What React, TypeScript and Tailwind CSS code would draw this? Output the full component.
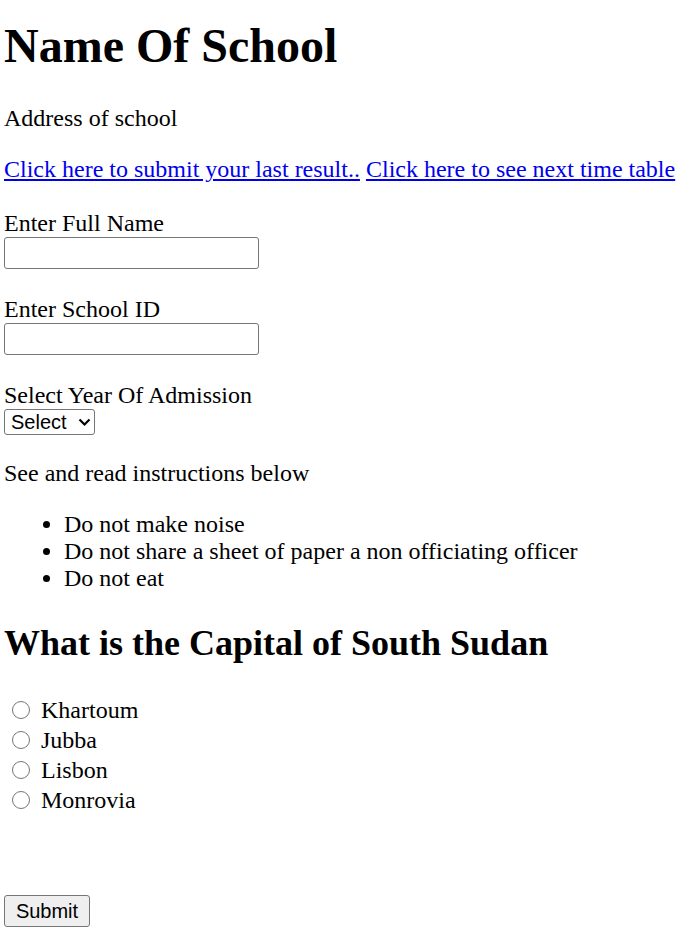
import React from 'react';

const rules = [
  'Do not make noise',
  'Do not share a sheet of paper a non officiating officer',
  'Do not eat',
];

const choices = ['Khartoum', 'Jubba', 'Lisbon', 'Monrovia'];

export default function App() {
  return (
    <div className="bg-white text-black font-['Liberation_Serif','Times_New_Roman',serif] text-[24px] leading-[normal] pl-[4px] pt-[18px] min-h-[933px]">
      <h1 className="text-[48px] font-bold leading-[normal] mb-[32px]">Name Of School</h1>

      <p className="mb-[24px]">Address of school</p>

      <p className="mb-[27px] whitespace-nowrap">
        <a href="#" className="text-[#0000ee] underline">Click here to submit your last result..</a>{' '}
        <a href="#" className="text-[#0000ee] underline">Click here to see next time table</a>
      </p>

      {/* form fields */}
      <form>
        <div className="mb-[27px]">
          <label className="block">Enter Full Name</label>
          <input
            type="text"
            className="block w-[255px] h-[32px] border-[1.5px] border-[#767676] rounded-[3px] bg-white px-[3px] font-['Liberation_Sans',Arial,sans-serif] text-[20px]"
          />
        </div>

        <div className="mb-[27px]">
          <label className="block">Enter School ID</label>
          <input
            type="text"
            className="block w-[255px] h-[32px] border-[1.5px] border-[#767676] rounded-[3px] bg-white px-[3px] font-['Liberation_Sans',Arial,sans-serif] text-[20px]"
          />
        </div>

        <div className="mb-[25px]">
          <label className="block">Select Year Of Admission</label>
          <div className="relative w-[91px] h-[26px]">
            <select className="appearance-none block w-full h-full border-[1.5px] border-[#767676] rounded-[3px] bg-white pl-[6px] pr-[20px] font-['Liberation_Sans',Arial,sans-serif] text-[20px] leading-[20px] text-black">
              <option>Select</option>
              <option>2019</option>
              <option>2020</option>
              <option>2021</option>
            </select>
            <svg className="absolute right-[4px] top-[9px] pointer-events-none" width="13" height="9" viewBox="0 0 13 9">
              <path d="M1.5 1.5 L6.5 6.5 L11.5 1.5" fill="none" stroke="#000" strokeWidth="2.2" />
            </svg>
          </div>
        </div>

        <p className="mb-[24px]">See and read instructions below</p>

        <ul className="list-disc pl-[60px] mb-[24px]">
          {rules.map((r) => (
            <li key={r}>{r}</li>
          ))}
        </ul>

        <h2 className="text-[36px] font-bold leading-[normal] mt-[30px] mb-[31px]">
          What is the Capital of South Sudan
        </h2>

        <div>
          {choices.map((c) => (
            <label key={c} className="flex items-center h-[30px] leading-[30px]">
              <input
                type="radio"
                name="capital"
                className="appearance-none ml-[8px] mr-[11px] w-[18px] h-[18px] rounded-full border-[1.5px] border-[#767676] bg-white"
              />
              <span>{c}</span>
            </label>
          ))}
        </div>

        <div className="pt-[80px]">
          <button
            type="submit"
            className="w-[86px] h-[32px] bg-[#efefef] border-[1.5px] border-[#767676] rounded-[3px] font-['Liberation_Sans',Arial,sans-serif] text-[20px] leading-[20px] text-black"
          >
            Submit
          </button>
        </div>
      </form>
    </div>
  );
}
